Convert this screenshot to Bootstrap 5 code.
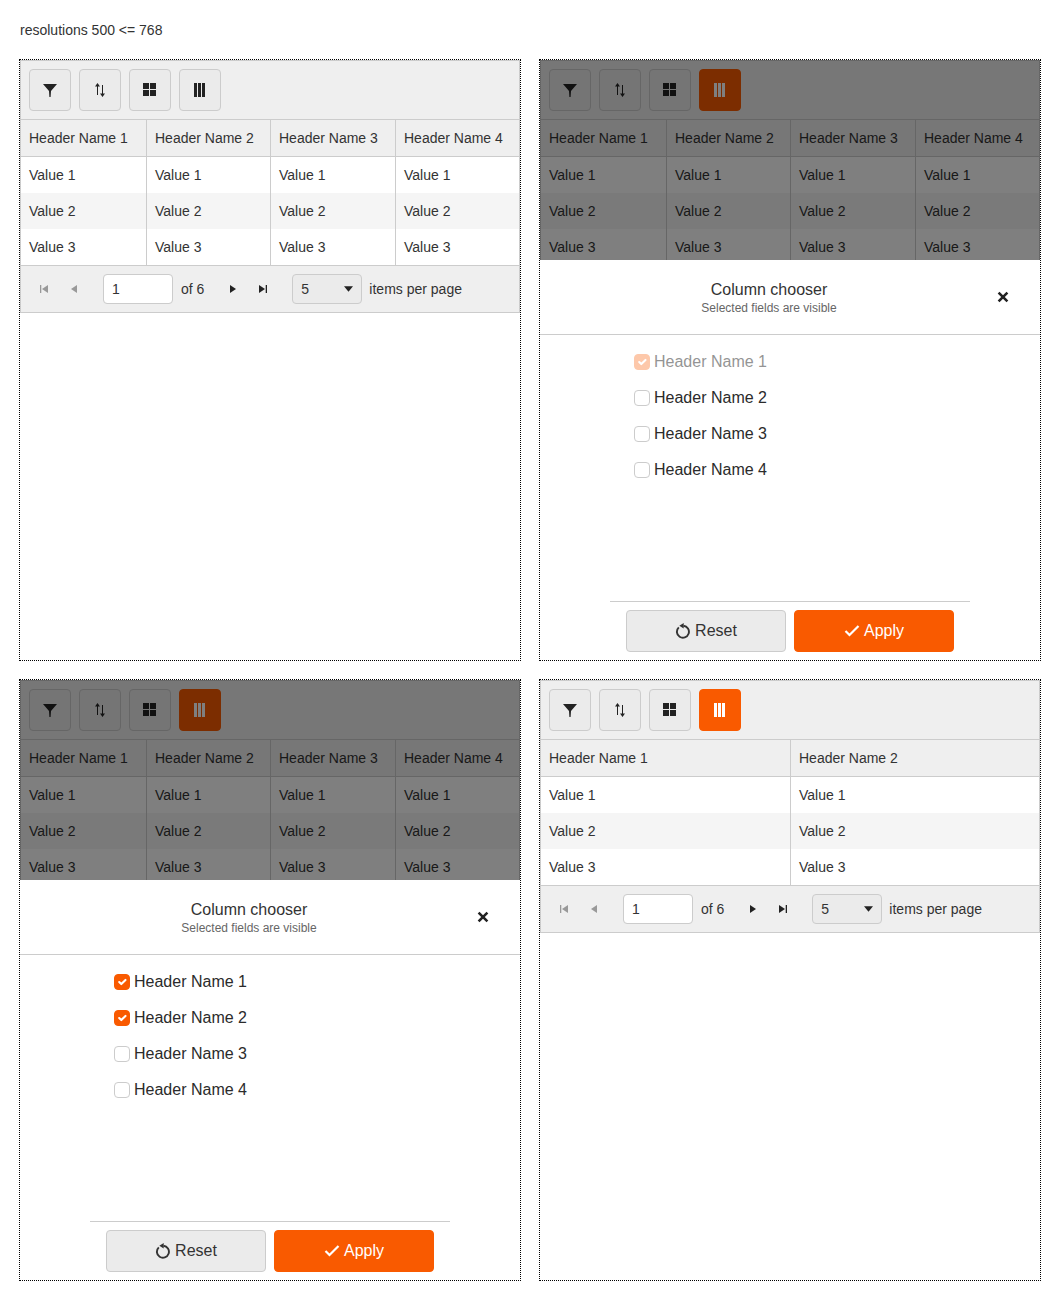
<!DOCTYPE html>
<html lang="en">
<head>
    <meta charset="UTF-8">
    <meta name="viewport" content="width=device-width, initial-scale=1.0">
    <title>Data grid resolutions</title>
    <link href="https://cdn.jsdelivr.net/npm/bootstrap@5.3.3/dist/css/bootstrap.min.css" rel="stylesheet">
    <script src="https://cdn.jsdelivr.net/npm/bootstrap@5.3.3/dist/js/bootstrap.bundle.min.js"></script>

    <style>
        * {
            font-family: "Liberation Sans", Arial, sans-serif;
        }
        body {
            background-color: #fff;
            color: #333;
            font-size: 14px;
            line-height: 20px;
        }
        .page-title {
            height: 59px;
            padding: 20px 0 0 20px;
        }
        .panels {
            display: grid;
            grid-template-columns: 502px 502px;
            grid-auto-rows: 602px;
            gap: 18px;
            padding-left: 19px;
        }
        .panel {
            position: relative;
            border: 1px dotted #000;
            overflow: hidden;
        }
        .grid-box {
            border: 1px solid #ccc;
        }
        .tool-row {
            background-color: #efefef;
            border-bottom: 1px solid #ccc;
            padding: 8px;
            gap: 8px;
        }
        .tool-btn {
            width: 42px;
            height: 42px;
            padding: 0;
            background-color: #ebebeb;
            border: 1px solid #ccc;
            border-radius: 4px;
            color: #222;
        }
        .tool-btn.is-on {
            background-color: #f95a00;
            border-color: #f95a00;
            color: #fff;
        }
        .tool-btn svg {
            width: 16px;
            height: 16px;
        }
        .data-table {
            table-layout: fixed;
            width: 100%;
            margin: 0;
            font-size: 14px;
            color: #333;
            border-collapse: separate;
            border-spacing: 0;
            --bs-table-color: #333;
        }
        .data-table th, .data-table td {
            padding: 0 8px;
            height: 36px;
            font-weight: 400;
            border-bottom: 0;
            border-right: 1px solid #ccc;
            vertical-align: middle;
            white-space: nowrap;
        }
        .data-table th:last-child, .data-table td:last-child {
            border-right: 0;
        }
        .data-table thead th {
            height: 37px;
            background-color: #efefef;
            border-bottom: 1px solid #ccc;
            box-shadow: none;
        }
        .data-table tbody tr:nth-child(even) td {
            background-color: #f5f5f5;
        }
        .data-table tbody tr:last-child td {
            height: 37px;
            border-bottom: 1px solid #ccc;
        }
        .four-cols th:nth-child(1) { width: 126px; }
        .four-cols th:nth-child(2) { width: 124px; }
        .four-cols th:nth-child(3) { width: 125px; }
        .two-cols th:nth-child(1) { width: 250px; }
        .pager-row {
            background-color: #efefef;
            height: 46px;
            padding-left: 8px;
        }
        .pager-btn {
            width: 30px;
            height: 30px;
            color: #222;
        }
        .pager-btn.is-off {
            color: #999;
        }
        .pager-btn svg {
            width: 10px;
            height: 10px;
        }
        .page-input, .size-select {
            width: 70px;
            height: 30px;
            padding: 0 8px;
            font-size: 14px;
            color: #333;
            border: 1px solid #ccc;
            border-radius: 4px;
            box-shadow: none;
        }
        .size-select {
            margin-right: 7px;
            background-color: #ebebeb;
            background-image: url("data:image/svg+xml,%3csvg xmlns='http://www.w3.org/2000/svg' viewBox='0 0 10 6'%3e%3cpath fill='%23222' d='M0 0h10L5 6z'/%3e%3c/svg%3e");
            background-position: right 8px center;
            background-size: 9px 6px;
        }
        .gap-14 {
            margin-right: 14px;
        }
        .dim-layer {
            position: absolute;
            left: 0;
            right: 0;
            top: 0;
            height: 200px;
            background-color: rgba(0, 0, 0, .5);
        }
        .chooser {
            position: absolute;
            left: 0;
            right: 0;
            top: 200px;
            bottom: 0;
            background-color: #fff;
        }
        .chooser-head {
            height: 75px;
            padding: 20px 42px 0 0;
            border-bottom: 1px solid #ccc;
            position: relative;
        }
        .chooser-title {
            font-size: 16px;
            line-height: 20px;
            color: #333;
        }
        .chooser-sub {
            font-size: 12px;
            line-height: 16px;
            color: #666;
        }
        .close-x {
            position: absolute;
            right: 29px;
            top: 29px;
            width: 16px;
            height: 16px;
            padding: 0;
            border: 0;
            background: none;
            color: #222;
            line-height: 0;
        }
        .close-x svg {
            width: 16px;
            height: 16px;
        }
        .chooser-list {
            padding: 9px 0 0 94px;
        }
        .pick-row {
            display: flex;
            align-items: center;
            gap: 4px;
            height: 36px;
            min-height: 36px;
            margin: 0;
            padding: 0;
            font-size: 16px;
            color: #2b2b2b;
        }
        .pick-row .form-check-input {
            float: none;
            width: 16px;
            height: 16px;
            margin: 0;
            border: 1px solid #ccc;
            border-radius: 4px;
            box-shadow: none;
            --bs-form-check-bg-image: url("data:image/svg+xml,%3csvg xmlns='http://www.w3.org/2000/svg' viewBox='0 0 16 16'%3e%3cpath fill='none' stroke='%23fff' stroke-width='2.400' d='M3.500 8l3 3 6-6'/%3e%3c/svg%3e");
        }
        .pick-row .form-check-input:checked {
            background-color: #f95a00;
            border-color: #f95a00;
        }
        .pick-row .form-check-input:disabled {
            opacity: .33;
        }
        .pick-row .form-check-label {
            opacity: 1;
        }
        .pick-row .form-check-input:disabled ~ .form-check-label {
            opacity: .5;
        }
        .chooser-foot {
            width: 360px;
            margin: 0 auto;
            border-top: 1px solid #ccc;
            padding: 8px 0;
            gap: 8px;
        }
        .foot-btn {
            width: 160px;
            height: 42px;
            padding: 0;
            font-size: 16px;
            border-radius: 4px;
            gap: 4px;
        }
        .foot-reset {
            background-color: #ebebeb;
            border: 1px solid #ccc;
            color: #333;
        }
        .foot-apply {
            background-color: #f95a00;
            border: 1px solid #f95a00;
            color: #fff;
        }
        .foot-btn svg {
            width: 16px;
            height: 16px;
        }
    </style>
</head>

<body>

    <!-- Icons -->

    <svg width="0" height="0" class="position-absolute">
        <symbol id="i-filter" viewBox="0 0 16 16"><path fill="currentColor" d="M1 2h14L9 9 8.600 15H7.400L7 9z"/></symbol>
        <symbol id="i-sort" viewBox="0 0 16 16"><path fill="currentColor" d="M5.500 1L8 4.500H6V13H5V4.500H3zM10 3h1v8.500h2L10.500 15 8 11.500h2z"/></symbol>
        <symbol id="i-grid" viewBox="0 0 16 16"><path fill="currentColor" d="M1 1h6v6H1zM8 1h6v6H8zM1 8h6v6H1zM8 8h6v6H8z"/></symbol>
        <symbol id="i-cols" viewBox="0 0 16 16"><path fill="currentColor" d="M2 1h3v14H2zM6 1h3v14H6zM10 1h3v14h-3z"/></symbol>
        <symbol id="i-first" viewBox="0 0 10 10"><path fill="currentColor" d="M1 1h1.300v8H1zM9 1v8L3 5z"/></symbol>
        <symbol id="i-prev" viewBox="0 0 10 10"><path fill="currentColor" d="M8 1v8L2 5z"/></symbol>
        <symbol id="i-next" viewBox="0 0 10 10"><path fill="currentColor" d="M2 1v8l6-4z"/></symbol>
        <symbol id="i-last" viewBox="0 0 10 10"><path fill="currentColor" d="M9 1H7.700v8H9zM1 1v8l6-4z"/></symbol>
        <symbol id="i-reset" viewBox="0 0 16 16"><path fill="none" stroke="currentColor" stroke-width="1.900" d="M3.800 4.400A6 6 0 1 0 8.500 2.800"/><path fill="currentColor" d="M8.700 0v5.600L4.300 2.800z"/></symbol>
        <symbol id="i-check" viewBox="0 0 16 16"><path fill="none" stroke="currentColor" stroke-width="2.200" d="M1.500 8l4 4 9-9"/></symbol>
        <symbol id="i-close" viewBox="0 0 16 16"><path fill="none" stroke="currentColor" stroke-width="2.600" d="M3.600 3.600l8.800 8.800M12.400 3.600l-8.800 8.800"/></symbol>
    </svg>

    <p class="page-title m-0">resolutions 500 &lt;= 768</p>

    <div class="panels" id="panels"></div>


    <!-- JavaScript -->

    <script>
        function icon(name) {
            return `<svg><use href="#i-${name}"></use></svg>`;
        }

        function pagerRow() {
            return `
                <div class="pager-row d-flex align-items-center">
                    <span class="pager-btn is-off d-flex align-items-center justify-content-center">${icon('first')}</span>
                    <span class="pager-btn is-off d-flex align-items-center justify-content-center gap-14">${icon('prev')}</span>
                    <input class="form-control page-input me-2" type="text" value="1">
                    <span class="gap-14">of 6</span>
                    <span class="pager-btn d-flex align-items-center justify-content-center">${icon('next')}</span>
                    <span class="pager-btn d-flex align-items-center justify-content-center gap-14">${icon('last')}</span>
                    <select class="form-select size-select"><option>5</option></select>
                    <span>items per page</span>
                </div>`;
        }

        //builds the grid part of a panel, the pager stays out when the chooser covers it
        function gridBox(columns, active, withPager) {
            const tools = ['filter', 'sort', 'grid', 'cols'].map(name => {
                const on = active && name === 'cols' ? ' is-on' : '';
                return `<button type="button" class="btn tool-btn${on} d-flex align-items-center justify-content-center">${icon(name)}</button>`;
            }).join('');

            const heads = columns.map(n => `<th>Header Name ${n}</th>`).join('');
            const rows = [1, 2, 3].map(v => {
                return `<tr>${columns.map(() => `<td>Value ${v}</td>`).join('')}</tr>`;
            }).join('');
            const colClass = columns.length === 4 ? 'four-cols' : 'two-cols';

            return `
                <div class="grid-box">
                    <div class="tool-row d-flex">${tools}</div>
                    <table class="table data-table ${colClass}">
                        <thead><tr>${heads}</tr></thead>
                        <tbody>${rows}</tbody>
                    </table>
                    ${withPager ? pagerRow() : ''}
                </div>`;
        }

        //builds the column chooser sheet
        function chooser(picks) {
            const rows = [1, 2, 3, 4].map(n => {
                const state = picks[n] || '';
                return `<label class="form-check pick-row">
                            <input class="form-check-input" type="checkbox" ${state}>
                            <span class="form-check-label">Header Name ${n}</span>
                        </label>`;
            }).join('');

            return `
                <div class="dim-layer"></div>
                <div class="chooser d-flex flex-column">
                    <div class="chooser-head text-center">
                        <div class="chooser-title">Column chooser</div>
                        <div class="chooser-sub">Selected fields are visible</div>
                        <button type="button" class="close-x" aria-label="Close">${icon('close')}</button>
                    </div>
                    <div class="chooser-list flex-grow-1">${rows}</div>
                    <div class="chooser-foot d-flex justify-content-center">
                        <button type="button" class="btn foot-btn foot-reset d-flex align-items-center justify-content-center">${icon('reset')}Reset</button>
                        <button type="button" class="btn foot-btn foot-apply d-flex align-items-center justify-content-center">${icon('check')}Apply</button>
                    </div>
                </div>`;
        }

        const all = [1, 2, 3, 4];
        document.getElementById('panels').innerHTML = `
            <div class="panel">${gridBox(all, false, true)}</div>
            <div class="panel">${gridBox(all, true, false)}${chooser({1: 'checked disabled'})}</div>
            <div class="panel">${gridBox(all, true, false)}${chooser({1: 'checked', 2: 'checked'})}</div>
            <div class="panel">${gridBox([1, 2], true, true)}</div>`;
    </script>

</body>
</html>
